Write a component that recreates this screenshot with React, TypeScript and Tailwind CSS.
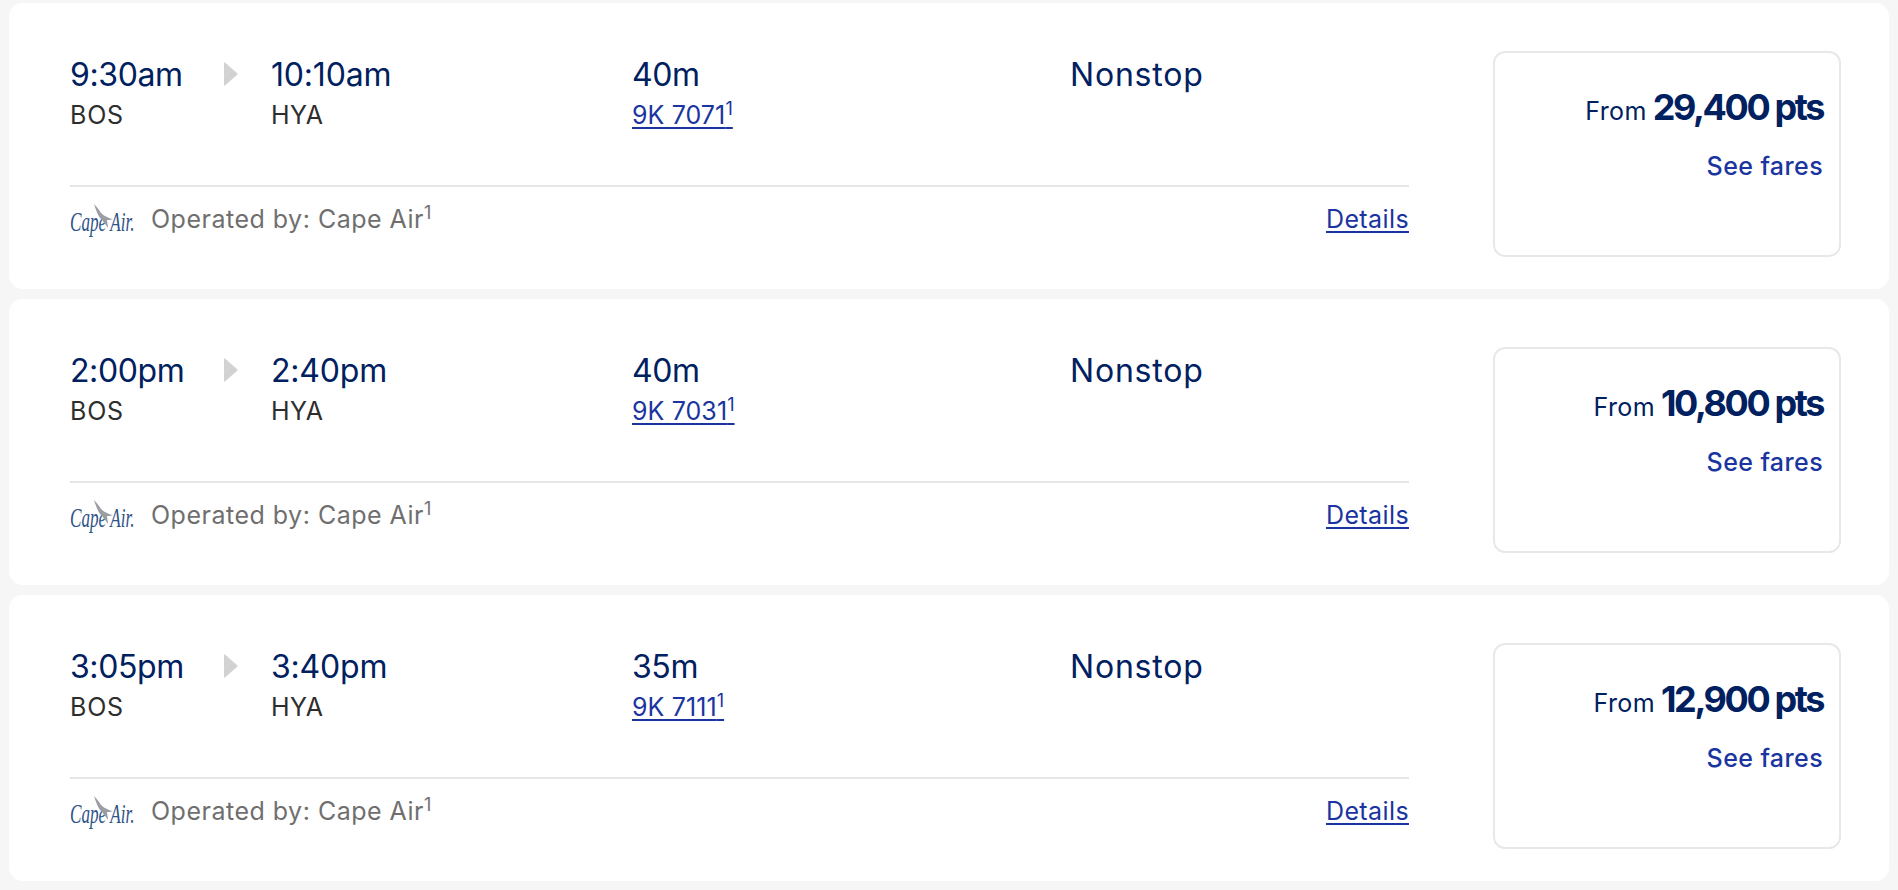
const flights = [
  { dep: "9:30am", arr: "10:10am", dur: "40m", num: "9K 7071", pts: "29,400 pts" },
  { dep: "2:00pm", arr: "2:40pm", dur: "40m", num: "9K 7031", pts: "10,800 pts" },
  { dep: "3:05pm", arr: "3:40pm", dur: "35m", num: "9K 7111", pts: "12,900 pts" },
];

function CapeAirLogo() {
  return (
    <svg width="66" height="34" viewBox="0 0 66 34" className="mt-[1px] shrink-0 overflow-visible">
      <g transform="scale(0.635 1)">
        <text x="0" y="27" fontFamily="Liberation Serif" fontStyle="italic" fontSize="27" fill="#2f5488">
          Cape Air.
        </text>
      </g>
      <path d="M24 0 C27 3 29 6 31 9 C33 11 35 12 37 13 C39 14 41 15 43 15 C41 16 39 16 37 16 C37 18 38 21 38 24 C36 21 33 17 31 15 C28 12 26 6 24 0 Z" fill="#9a9da1" />
    </svg>
  );
}

function Card({ f }: { f: (typeof flights)[number] }) {
  return (
    <div className="flex h-[286px] rounded-[14px] bg-white pl-[61px] pr-[48px] pt-[48px]">
      <div className="flex w-[1339px] flex-col">
        <div className="flex h-[134px] items-start">
          <div className="w-[154px]">
            <div className="mt-[1px] text-[32px] leading-[46px] tracking-[-0.4px] text-[#002060]">{f.dep}</div>
            <div className="mt-[1px] text-[25px] leading-[32px] tracking-[0.8px] text-[#2e2e2e]">BOS</div>
          </div>
          <svg width="14" height="24" viewBox="0 0 14 24" className="mt-[11px] shrink-0">
            <path d="M1 0.5 L14 12 L1 23.5 Q0 24 0 22.5 L0 1.5 Q0 0 1 0.5 Z" fill="#d2d2d2" />
          </svg>
          <div className="ml-[33px] w-[361px]">
            <div className="mt-[1px] text-[32px] leading-[46px] tracking-[-0.2px] text-[#002060]">{f.arr}</div>
            <div className="mt-[1px] text-[25px] leading-[32px] tracking-[0.5px] text-[#2e2e2e]">HYA</div>
          </div>
          <div className="w-[438px]">
            <div className="mt-[1px] text-[32px] leading-[46px] tracking-[-0.4px] text-[#002060]">{f.dur}</div>
            <div className="mt-[1px] text-[25px] leading-[32px] tracking-[0.1px] text-[#1a34a0]">
              <span className="underline decoration-2 underline-offset-[3px]">
                {f.num}
                <sup className="text-[18px]">1</sup>
              </span>
            </div>
          </div>
          <div className="mt-[1px] text-[32px] leading-[46px] tracking-[0.8px] text-[#002060]">Nonstop</div>
        </div>
        <div className="h-[2px] bg-[#e6e6e6]" />
        <div className="mt-[16px] flex items-start justify-between">
          <div className="flex items-start gap-[15px]">
            <CapeAirLogo />
            <div className="text-[25px] leading-[32px] tracking-[0.5px] text-[#6f6f6f]">
              Operated by: Cape Air<sup className="text-[18px]">1</sup>
            </div>
          </div>
          <a className="text-[25px] leading-[32px] tracking-[0.4px] text-[#1a34a0] underline decoration-2 underline-offset-[3px]">Details</a>
        </div>
      </div>
      <div className="ml-[84px] flex h-[206px] w-[348px] flex-col items-end rounded-[12px] border-2 border-[#e8e8e8] pr-[16px] pt-[29px]">
        <div className="flex items-baseline leading-[50px] text-[#002060]">
          <span className="text-[25px] tracking-[0.4px]">From</span>
          <span className="ml-[6px] text-[36px] font-bold tracking-[-2.4px]">{f.pts}</span>
        </div>
        <div className="mt-[14px] text-[25px] font-medium leading-[32px] tracking-[0.4px] text-[#1a34a0]">See fares</div>
      </div>
    </div>
  );
}

export default function App() {
  return (
    <div className="flex h-[890px] flex-col gap-[10px] bg-[#f6f6f6] px-[9px] pt-[3px] font-['Inter',sans-serif]">
      {flights.map((f) => (
        <Card key={f.num} f={f} />
      ))}
    </div>
  );
}
